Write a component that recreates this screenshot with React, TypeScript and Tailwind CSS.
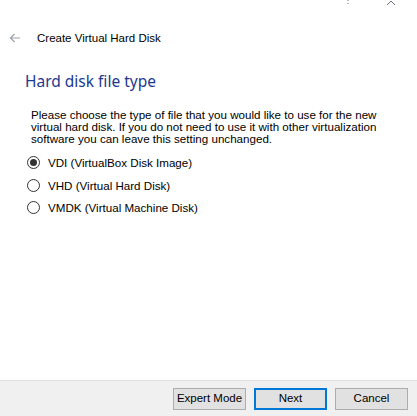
export default function App() {
  const options = [
    { label: "VDI (VirtualBox Disk Image)", checked: true },
    { label: "VHD (Virtual Hard Disk)", checked: false },
    { label: "VMDK (Virtual Machine Disk)", checked: false },
  ];

  return (
    <div className="flex h-[416px] w-[417px] flex-col overflow-hidden bg-white font-['Liberation_Sans',sans-serif] text-black">
      <div className="relative flex-1">
        {/* cut-off window controls */}
        <svg width="60" height="8" viewBox="0 0 60 8" className="absolute right-[15px] top-0 text-gray-500">
          <path d="M6 0v1M6 3v1" stroke="currentColor" strokeWidth="1" />
          <path d="M45 5l4-4 4 4" fill="none" stroke="currentColor" strokeWidth="1" />
        </svg>

        <div className="flex items-center pl-[9px] pt-[30px]">
          <svg width="12" height="10" viewBox="0 0 12 10" className="text-gray-400">
            <path d="M11 5H1.5M5.5 1L1.5 5l4 4" fill="none" stroke="currentColor" strokeWidth="1.2" />
          </svg>
          <span className="ml-[16px] text-[11.5px] leading-[16px]">Create Virtual Hard Disk</span>
        </div>

        <h1 className="pl-[25px] pt-[25px] font-['Noto_Sans',sans-serif] text-[15.5px] leading-[20px] text-[#1b3a8f]">
          Hard disk file type
        </h1>

        <p className="pl-[31px] pr-[20px] pt-[18px] text-[11.6px] leading-[12px]">
          Please choose the type of file that you would like to use for the new virtual hard disk. If you do not need to use
          it with other virtualization software you can leave this setting unchanged.
        </p>

        <div className="flex flex-col gap-[9.5px] pl-[27px] pt-[11px]">
          {options.map((o) => (
            <label key={o.label} className="flex items-center gap-[8px] text-[11.6px] leading-[13px]">
              <span className="flex h-[13px] w-[13px] items-center justify-center rounded-full border border-[#333] bg-white">
                {o.checked && <span className="h-[7px] w-[7px] rounded-full bg-[#333]" />}
              </span>
              {o.label}
            </label>
          ))}
        </div>
      </div>

      <div className="flex h-[36px] items-center justify-end gap-[8px] border-t border-[#dfdfdf] bg-[#f0f0f0] pr-[9px] text-[11.5px]">
        <button className="h-[22px] w-[73px] border border-[#adadad] bg-[#e1e1e1]">Expert Mode</button>
        <button className="h-[22px] w-[73px] border-2 border-[#0078d7] bg-[#e1e1e1]">Next</button>
        <button className="h-[22px] w-[73px] border border-[#adadad] bg-[#e1e1e1]">Cancel</button>
      </div>
    </div>
  );
}
